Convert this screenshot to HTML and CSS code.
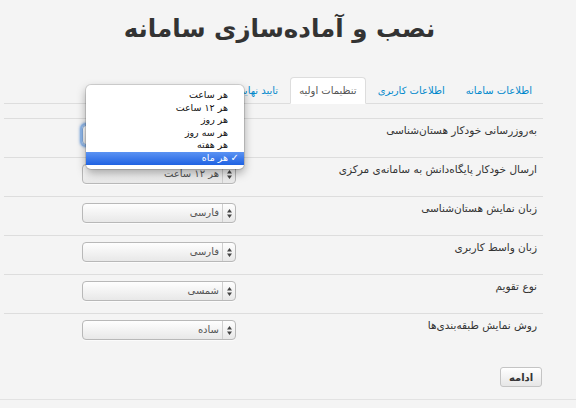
FILE: index.html
```html
<!DOCTYPE html>
<html lang="fa" dir="rtl">
<head>
<meta charset="utf-8">
<title>نصب و آماده‌سازی سامانه</title>
<link rel="stylesheet" href="styles.css">
</head>
<body>
<div class="page">
  <h1 class="title">نصب و آماده‌سازی سامانه</h1>
  <ul class="tabs">
    <li class="tab"><a class="tab-link">اطلاعات سامانه</a></li>
    <li class="tab"><a class="tab-link">اطلاعات کاربری</a></li>
    <li class="tab active"><a class="tab-link">تنظیمات اولیه</a></li>
    <li class="tab"><a class="tab-link">تایید نهایی</a></li>
  </ul>
  <form class="form">
    <div class="row">
      <label class="label">به‌روزرسانی خودکار هستان‌شناسی</label>
      <div class="select focused">
        <span class="arrows"><svg width="5" height="9" viewBox="0 0 5 9"><path d="M2.5 0L5 3.5H0z M2.5 9L5 5.5H0z" fill="#444"/></svg></span>
        <span class="value">هر ماه</span>
        <ul class="popup">
          <li class="option">هر ساعت</li>
          <li class="option">هر ۱۲ ساعت</li>
          <li class="option">هر روز</li>
          <li class="option">هر سه روز</li>
          <li class="option">هر هفته</li>
          <li class="option selected"><span class="check">✓</span>هر ماه</li>
        </ul>
      </div>
    </div>
    <div class="row">
      <label class="label">ارسال خودکار پایگاه‌دانش به سامانه‌ی مرکزی</label>
      <div class="select">
        <span class="arrows"><svg width="5" height="9" viewBox="0 0 5 9"><path d="M2.5 0L5 3.5H0z M2.5 9L5 5.5H0z" fill="#444"/></svg></span>
        <span class="value">هر ۱۲ ساعت</span>
      </div>
    </div>
    <div class="row">
      <label class="label">زبان نمایش هستان‌شناسی</label>
      <div class="select">
        <span class="arrows"><svg width="5" height="9" viewBox="0 0 5 9"><path d="M2.5 0L5 3.5H0z M2.5 9L5 5.5H0z" fill="#444"/></svg></span>
        <span class="value">فارسی</span>
      </div>
    </div>
    <div class="row">
      <label class="label">زبان واسط کاربری</label>
      <div class="select">
        <span class="arrows"><svg width="5" height="9" viewBox="0 0 5 9"><path d="M2.5 0L5 3.5H0z M2.5 9L5 5.5H0z" fill="#444"/></svg></span>
        <span class="value">فارسی</span>
      </div>
    </div>
    <div class="row">
      <label class="label">نوع تقویم</label>
      <div class="select">
        <span class="arrows"><svg width="5" height="9" viewBox="0 0 5 9"><path d="M2.5 0L5 3.5H0z M2.5 9L5 5.5H0z" fill="#444"/></svg></span>
        <span class="value">شمسی</span>
      </div>
    </div>
    <div class="row">
      <label class="label">روش نمایش طبقه‌بندی‌ها</label>
      <div class="select">
        <span class="arrows"><svg width="5" height="9" viewBox="0 0 5 9"><path d="M2.5 0L5 3.5H0z M2.5 9L5 5.5H0z" fill="#444"/></svg></span>
        <span class="value">ساده</span>
      </div>
    </div>
    <div class="actions">
      <button type="button" class="btn">ادامه</button>
    </div>
  </form>
</div>
<div class="footer-line"></div>
</body>
</html>
```

FILE: styles.css
```css
html, body {
  margin: 0;
  padding: 0;
}
body {
  background: #f4f4f4;
  font-family: "DejaVu Sans", sans-serif;
  color: #333;
  font-size: 12px;
}
.page {
  width: 539px;
  margin: 0 auto 0 4px;
}
.title {
  margin: 0;
  padding: 10px 0 0 12px;
  height: 38px;
  line-height: 38px;
  margin-bottom: 29px;
  text-align: center;
  font-size: 24.5px;
  font-weight: bold;
  color: #333;
}
.tabs {
  list-style: none;
  margin: 0;
  padding: 0 2px 0 0;
  display: flex;
  border-bottom: 1px solid #ddd;
  height: 26px;
}
.tab {
  margin-left: 3px;
}
.tab-link {
  display: block;
  padding: 0 8px;
  line-height: 25px;
  border: 1px solid transparent;
  border-radius: 4px 4px 0 0;
  color: #0088cc;
  font-size: 10px;
  white-space: nowrap;
}
.tab.active .tab-link {
  background: #fff;
  border-color: #ddd;
  border-bottom-color: #fff;
  color: #555;
}
.form {
  margin: 0;
  padding-top: 14px;
}
.row {
  display: flex;
  border-top: 1px solid #ddd;
  height: 38px;
}
.label {
  flex: 1;
  padding: 3px 6px 0 0;
  line-height: 16px;
  font-size: 10.5px;
  color: #333;
}
.select {
  position: relative;
  display: flex;
  width: 152px;
  height: 18px;
  margin: 6px 0 0 78px;
  border: 1px solid #b8b8b8;
  border-radius: 4px;
  background: linear-gradient(#fefefe, #e8e8e8);
  box-shadow: 0 1px 0 rgba(255,255,255,0.6);
}
.select.focused {
  border-color: #7fa8dc;
  box-shadow: 0 0 0 2px #8db5e8, 0 0 2px 3px rgba(109,160,225,0.5);
}
.arrows {
  width: 12px;
  border-left: 1px solid #cfcfcf;
  display: flex;
  align-items: center;
  justify-content: center;
}
.value {
  flex: 1;
  padding-right: 3px;
  line-height: 18px;
  font-size: 10px;
  color: #555;
}
.popup {
  position: absolute;
  top: -41px;
  left: 3px;
  width: 158px;
  margin: 0;
  padding: 4px 0;
  list-style: none;
  background: #fff;
  border-radius: 5px;
  box-shadow: 0 0 0 1px rgba(0,0,0,0.12), 0 4px 10px rgba(0,0,0,0.35);
  z-index: 10;
}
.option {
  position: relative;
  padding-right: 16px;
  line-height: 12.6px;
  font-size: 9.5px;
  color: #111;
}
.option.selected {
  background: linear-gradient(#5b93f3, #1f62e2);
  color: #fff;
}
.check {
  position: absolute;
  right: 5px;
  top: 0;
  font-size: 10px;
}
.actions {
  display: flex;
  padding-top: 15px;
}
.btn {
  height: 20px;
  width: 42px;
  padding: 0;
  margin: 0 1px 0 0;
  border: 1px solid #c4c4c4;
  border-radius: 3px;
  background: linear-gradient(#ffffff, #e6e6e6);
  font-family: "DejaVu Sans", sans-serif;
  font-size: 10px;
  font-weight: bold;
  color: #333;
}
.footer-line {
  margin-top: 12px;
  border-top: 1px solid #e2e2e2;
}
```
